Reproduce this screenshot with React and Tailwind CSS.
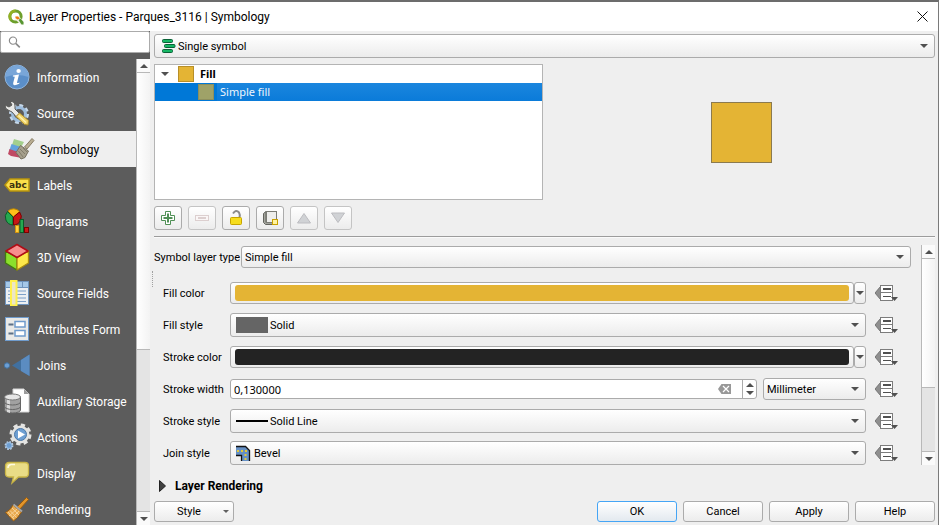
import React from "react";

const raised = "border border-[#ababab] rounded-[3px] bg-linear-to-b from-white to-[#ececec]";

function InfoIcon() {
  return (
    <svg width="26" height="26" viewBox="0 0 26 26">
      <circle cx="13" cy="13" r="12" fill="#5b8fc9" stroke="#8fb4dc" />
      <path d="M1.500 13A11.500 11.500 0 0 1 24.500 13Q13 9 1.500 13Z" fill="#79a6d8" />
      <ellipse cx="14.600" cy="7" rx="2.200" ry="1.900" fill="#fff" />
      <path d="M9 11.500L15 10.500L13 18.500Q13 19.600 15.500 18.500L15.200 19.800Q8.200 23 9.300 18.500L10.800 12.800L8.800 12.500Z" fill="#fff" />
    </svg>
  );
}

function SourceIcon() {
  return (
    <svg width="26" height="26" viewBox="0 0 26 26">
      <circle cx="15" cy="14" r="8" fill="none" stroke="#c5d8ea" strokeWidth="4" strokeDasharray="3.600 2.680" />
      <circle cx="15" cy="14" r="6.500" fill="#5c5c5c" stroke="#9dbddd" strokeWidth="3" />
      <path d="M4 10Q1 9 1 5L5 7L8 5L6 1.500Q11 1 11 6L11 9L18 16L14 19L8 12Z" fill="#e9e9e7" stroke="#5a5a58" />
      <path d="M12 16.500L15.500 13L24.500 20.500L24 25L20.500 24.500Z" fill="#f0d268" stroke="#a98a2c" />
      <path d="M14.500 15.500L22 22.500" stroke="#fff3b0" strokeWidth="1.500" />
    </svg>
  );
}

function SymbologyIcon() {
  return (
    <svg width="28" height="24" viewBox="0 0 28 24">
      <path d="M7 2L17 5L13 12L5 8Z" fill="#a3cf8c" />
      <path d="M4.500 7L14 10L10 17L2.500 13Z" fill="#62a2dc" />
      <path d="M2.500 12L11 15L15 21L4 19L1 17Z" fill="#c04a64" />
      <path d="M25 1.500L27 3.500L20 12L17.500 10Z" fill="#b9ad92" stroke="#887d66" />
      <path d="M13.500 8.500L21.500 14L18 20.500L14 22L9 15.500Z" fill="#a59f8c" stroke="#77715f" />
      <path d="M13 12L18 17M11.500 14L16 20M16 11L20 15" stroke="#827c6a" />
    </svg>
  );
}

function LabelsIcon() {
  return (
    <svg width="26" height="26" viewBox="0 0 26 26">
      <path d="M1 13L6 7H25V19H6Z" fill="#fbe04a" stroke="#b8940c" strokeWidth="1.500" />
      <text x="5" y="16" fontFamily="DejaVu Sans" fontWeight="bold" fontSize="9" fill="#3c3410">abc</text>
    </svg>
  );
}

function DiagramsIcon() {
  return (
    <svg width="26" height="26" viewBox="0 0 26 26">
      <path d="M9.500 9L4 3A8 8 0 0 1 15.500 3.500Z" fill="#ffc21a" stroke="#b98500" />
      <path d="M9 9L3.500 3.500A8 8 0 0 0 9 17Z" fill="#26a850" stroke="#0a5a28" />
      <path d="M9.500 9L15.500 4A8 8 0 0 1 9.500 17Z" fill="#c81616" stroke="#7a0000" />
      <rect x="11.500" y="17.500" width="3.500" height="7" fill="#ffd23c" stroke="#d09010" />
      <rect x="16" y="11.500" width="3.500" height="13" fill="#26a850" stroke="#0a5a28" />
      <rect x="20.500" y="19.500" width="4" height="5" fill="#c81616" stroke="#7a0000" />
    </svg>
  );
}

function CubeIcon() {
  return (
    <svg width="26" height="28" viewBox="0 0 26 28" strokeLinejoin="round">
      <path d="M1.500 8L13 14.500V27L1.500 20Z" fill="#8be02c" stroke="#417a10" strokeWidth="1.300" />
      <path d="M24.500 8L13 14.500V27L24.500 20Z" fill="#fde84a" stroke="#a88b10" strokeWidth="1.300" />
      <path d="M13 1.500L24 8L13 14.500L2 8Z" fill="#f88e8e" stroke="#b00c16" strokeWidth="1.500" />
    </svg>
  );
}

function FieldsIcon() {
  return (
    <svg width="26" height="26" viewBox="0 0 26 26">
      <rect x="1.500" y="1.500" width="23" height="23" fill="#eceff2" stroke="#6f94bd" />
      <rect x="2" y="2" width="22" height="5" fill="#a5c8e8" />
      <path d="M2 7.500H24M18.500 2V7" stroke="#6f94bd" />
      <path d="M4 11H22M4 14.500H22M4 18H22M4 21.500H22" stroke="#7da0c8" />
      <rect x="7" y="1" width="5.500" height="24.500" fill="#ece6c6" stroke="#fff04a" strokeWidth="2" />
    </svg>
  );
}

function FormIcon() {
  return (
    <svg width="26" height="26" viewBox="0 0 26 26">
      <rect x="1.500" y="1.500" width="23" height="23" fill="#e9e9e7" stroke="#6f9bcc" />
      <path d="M4.500 8.500H9.500M4.500 17.500H9.500" stroke="#5d7086" strokeWidth="2" />
      <rect x="11" y="5.500" width="10" height="5.500" fill="#fff" stroke="#6f9bcc" strokeWidth="1.500" />
      <rect x="11" y="14.500" width="10" height="5.500" fill="#fff" stroke="#6f9bcc" strokeWidth="1.500" />
    </svg>
  );
}

function JoinsIcon() {
  return (
    <svg width="26" height="26" viewBox="0 0 26 26">
      <circle cx="3" cy="13.500" r="2.700" fill="#6d9fd4" stroke="#41719f" />
      <path d="M8 13.500L25.500 2.500V24Z" fill="#41709f" />
      <path d="M17 8L25.500 2.500V24L17 19Z" fill="#5b8cc1" />
    </svg>
  );
}

function StorageIcon() {
  return (
    <svg width="26" height="28" viewBox="0 0 26 28">
      <path d="M9 2H20L25 7V25H9Z" fill="#fff" stroke="#d6d6d6" />
      <path d="M20 2V7H25Z" fill="#9b9b9b" />
      <path d="M.500 10V23A8 3 0 0 0 16.500 23V10Z" fill="#a1a1a1" stroke="#666" />
      <path d="M3 11V25L6 26V12Z" fill="#dadada" />
      <ellipse cx="8.500" cy="10" rx="8" ry="3" fill="#e5e5e5" stroke="#777" />
      <path d="M.500 15A8 3 0 0 0 16.500 15M.500 19.500A8 3 0 0 0 16.500 19.500" fill="none" stroke="#666" />
    </svg>
  );
}

function ActionsIcon() {
  return (
    <svg width="28" height="28" viewBox="0 0 28 28">
      <circle cx="16.500" cy="11.500" r="9.500" fill="none" stroke="#e4e4e2" strokeWidth="3" strokeDasharray="4.200 3.260" />
      <circle cx="16.500" cy="11.500" r="7.500" fill="#6e9fd2" stroke="#e4e4e2" strokeWidth="3" />
      <circle cx="16.500" cy="11.500" r="6" fill="none" stroke="#4b78a8" />
      <path d="M14 7.500L21 11.500L14 15.500Z" fill="#fff" />
      <circle cx="5" cy="22.500" r="3.700" fill="none" stroke="#b9d2ec" strokeWidth="1.500" strokeDasharray="1.700 1.200" />
      <circle cx="5" cy="22.500" r="3" fill="#6e9fd2" stroke="#a4c4e6" />
    </svg>
  );
}

function DisplayIcon() {
  return (
    <svg width="26" height="26" viewBox="0 0 26 26">
      <path d="M5 2.500H21Q24.500 2.500 24.500 6V13.500Q24.500 17 21 17H14.500L8 23L9.500 17H5Q1.500 17 1.500 13.500V6Q1.500 2.500 5 2.500Z" fill="#e9dc86" stroke="#c8b446" strokeWidth="1.300" />
      <path d="M4 8Q4 5 7 4.500L11 4.500" fill="none" stroke="#fffbe0" strokeWidth="1.500" />
    </svg>
  );
}

function RenderingIcon() {
  return (
    <svg width="26" height="26" viewBox="0 0 26 26">
      <path d="M22.500 1.500L24.500 3.500L16 13L13.500 10.500Z" fill="#e3952b" stroke="#9c5d0c" />
      <path d="M9 9L17.500 16Q14 22 9.500 25L1.500 16.500Q7 14 9 9Z" fill="#e8a94e" stroke="#9c5d0c" />
      <path d="M8 12L15 19M6 14.500L12.500 21.500M4 16L10 23M13 13L5 20M15 15L8 22" stroke="#f6d094" />
      <path d="M9.500 8.500L18 15.500" stroke="#a8a8a8" strokeWidth="2" />
    </svg>
  );
}

const sections = [
  ["Information", InfoIcon],
  ["Source", SourceIcon],
  ["Symbology", SymbologyIcon],
  ["Labels", LabelsIcon],
  ["Diagrams", DiagramsIcon],
  ["3D View", CubeIcon],
  ["Source Fields", FieldsIcon],
  ["Attributes Form", FormIcon],
  ["Joins", JoinsIcon],
  ["Auxiliary Storage", StorageIcon],
  ["Actions", ActionsIcon],
  ["Display", DisplayIcon],
  ["Rendering", RenderingIcon],
];

function Arrow({ up = false, className = "" }) {
  return (
    <svg className={className} width="8" height="4" viewBox="0 0 8 4">
      <path d={up ? "M0 4H8L4 0Z" : "M0 0H8L4 4Z"} fill="#505050" />
    </svg>
  );
}

function ScrollBar({ thumb }) {
  return (
    <div className="flex w-[14px] shrink-0 flex-col border-l border-[#b8b8b8] bg-[#e4e4e4]">
      <button aria-label="Scroll up" className="flex h-[14px] shrink-0 items-center justify-center border-b border-[#b8b8b8] bg-[#fafafa]"><Arrow up /></button>
      <div className={"border-b border-[#b8b8b8] bg-linear-to-r from-white to-[#f3f3f3] " + thumb} />
      <button aria-label="Scroll down" className="mt-auto flex h-[14px] shrink-0 items-center justify-center border-t border-[#b8b8b8] bg-[#fafafa]"><Arrow /></button>
    </div>
  );
}

function Select({ id, label, value, icon, className = "", pad = "pl-[3px]" }) {
  return (
    <div className={"grid min-w-0 items-center " + className}>
      <select id={id} aria-label={label} className={"col-start-1 row-start-1 h-full w-full min-w-0 appearance-none pt-px outline-none " + raised + " " + pad}>
        <option>{value}</option>
      </select>
      {icon && <span className="pointer-events-none col-start-1 row-start-1 justify-self-start pl-[6px]">{icon}</span>}
      <Arrow className="pointer-events-none col-start-1 row-start-1 mr-[7px] justify-self-end" />
    </div>
  );
}

function ColorButton({ id, label, color }) {
  return (
    <div className="flex h-[22px] flex-1">
      <button id={id} className={"flex-1 p-[2px] px-1 " + raised}><span className={"block h-full rounded-[3px] " + color} /></button>
      <button aria-label={label + " menu"} className={"flex w-3 items-center justify-center " + raised}><Arrow /></button>
    </div>
  );
}

function OverrideButton({ label }) {
  return (
    <button aria-label={label + " data defined override"} className="ml-[9px] h-[18px] w-6 shrink-0">
      <svg width="24" height="18" viewBox="0 0 24 18">
        <path d="M0 9L5.500 2.500V15.500Z" fill="#8f8f8f" stroke="#757575" />
        <rect x="5.500" y="1.500" width="12" height="15" fill="#fff" stroke="#7c7c7c" />
        <path d="M5 8.500H18" stroke="#7c7c7c" />
        <path d="M8 5H16" stroke="#505050" strokeWidth="2" />
        <path d="M8 12.500H16" stroke="#505050" />
        <path d="M16 13H23L19.500 17Z" fill="#505050" />
      </svg>
    </button>
  );
}

function Row({ id, label, children }) {
  return (
    <div className="flex h-8 items-center pl-[9px]">
      <label htmlFor={id} className="w-[67px] shrink-0 pt-[2px] whitespace-nowrap">{label}</label>
      <div className="flex flex-1 items-center">{children}</div>
      <OverrideButton label={label} />
    </div>
  );
}

function Tool({ label, disabled = false, children }) {
  return (
    <button aria-label={label} disabled={disabled} className={"flex h-6 w-7 items-center justify-center disabled:border-[#c4c4c4] " + raised}>
      <svg width="18" height="18" viewBox="0 0 18 18">{children}</svg>
    </button>
  );
}

const dialogButton = "h-[21px] w-20 border rounded-[3px] bg-linear-to-b from-white";

export default function App() {
  return (
    <div className="flex h-screen flex-col overflow-hidden border-t-2 border-r border-t-[#6c6c6c] border-r-[#7a7a7a] bg-[#efefef] font-[Roboto,sans-serif] text-[11px] leading-4 text-black">
      <header className="flex h-[29px] shrink-0 items-center bg-white pr-[10px] pl-2">
        <svg width="16" height="16" viewBox="0 0 16 16">
          <circle cx="7.500" cy="7.500" r="5.600" fill="none" stroke="#6d9f2c" strokeWidth="3" />
          <path d="M7.500 1.900A5.600 5.600 0 0 0 3 11" fill="none" stroke="#93b023" strokeWidth="2.600" />
          <path d="M7 7H10.500L16 12.500V15.500H12.500L7 10Z" fill="#f3f3e8" />
          <path d="M7.500 7.500H10L12 9.500L9.500 10.500L7.500 9Z" fill="#ee7913" />
          <path d="M10.500 11L12.500 9.500L15.500 13V15.500H13.500Z" fill="#589632" />
        </svg>
        <h1 className="ml-[5px] flex-1 text-xs font-normal">Layer Properties - Parques_3116 | Symbology</h1>
        <button aria-label="Close" className="h-[11px] w-[11px]">
          <svg width="11" height="11" viewBox="0 0 11 11"><path d="M.500 .500L10.500 10.500M10.500 .500L.500 10.500" stroke="#111" /></svg>
        </button>
      </header>

      <div className="flex min-h-0 flex-1">
        <aside className="flex w-[150px] shrink-0 flex-col bg-[#5c5c5c]">
          <div className="mb-[6px] flex h-[22px] shrink-0 items-center rounded-[2px] border border-[#ababab] bg-white pl-[7px]">
            <svg width="14" height="14" viewBox="0 0 14 14" fill="none" stroke="#8a8a8a">
              <circle cx="5.500" cy="5.500" r="4" strokeWidth="1.300" /><path d="M8.500 8.500L13 13" strokeWidth="1.800" />
            </svg>
            <input type="search" aria-label="Search" className="w-full min-w-0 bg-transparent px-1 outline-none" />
          </div>
          <div className="flex min-h-0 flex-1">
            <nav className="flex-1 overflow-hidden text-xs text-white">
              {sections.map(([name, Icon]) => (
                <a key={name} href="#" className={"flex h-9 items-center " + (name === "Symbology" ? "bg-[#efefef] pl-[7px] text-black" : "pl-1")}>
                  <span className="flex w-[33px] shrink-0 items-center"><Icon /></span>
                  <span className="pt-[2px] whitespace-nowrap">{name}</span>
                </a>
              ))}
            </nav>
            <ScrollBar thumb="h-[277px]" />
          </div>
        </aside>

        <main className="flex min-w-0 flex-1 flex-col pt-[3px] pr-[3px] pb-[3px] pl-1">
          <Select
            label="Symbol renderer"
            value="Single symbol"
            pad="pl-[23px]"
            className="h-6 shrink-0"
            icon={
              <svg className="ml-[2px]" width="14" height="14" viewBox="0 0 14 14" fill="#17b765" stroke="#0b6137">
                <rect x=".500" y=".500" width="10" height="3" rx="1" /><rect x="2.500" y="5.500" width="10.500" height="3" rx="1" /><rect x=".500" y="10.500" width="10" height="3" rx="1" />
              </svg>
            }
          />
          <section className="mt-[6px] flex h-[136px] shrink-0 gap-[6px] font-['Noto_Sans',sans-serif]">
            <ul className="flex-1 border border-[#b4b4b4] bg-white">
              <li className="flex h-[18px] items-center pl-[6px] font-bold">
                <Arrow />
                <span className="mr-[6px] ml-[9px] h-4 w-4 border border-[#b88f28] bg-[#e4b434]" />
                Fill
              </li>
              <li className="flex h-[18px] items-center bg-[#0078d7] pl-[43px] text-[#f0f6fc]">
                <span className="mr-[3px] h-4 w-4 border border-[#8d8f5d] bg-[#9fa268]" />
                <span className="h-full flex-1 bg-linear-to-b from-[#1a86de] to-[#0a7bd9] pl-[3px] leading-[18px]">Simple fill</span>
              </li>
            </ul>
            <div className="flex flex-1 items-center justify-center">
              <div className="h-[61px] w-[61px] border border-[#8b7a4e] bg-[#e4b434]" />
            </div>
          </section>

          <div className="mt-[6px] flex shrink-0 gap-[6px]">
            <Tool label="Add symbol layer">
              <path d="M6.500 2.500H11.500V6.500H15.500V11.500H11.500V15.500H6.500V11.500H2.500V6.500H6.500Z" fill="#fff" stroke="#4f8f55" />
              <path d="M9 4.500V13.500M4.500 9H13.500" stroke="#4f8f55" strokeWidth="2" />
            </Tool>
            <Tool label="Remove symbol layer" disabled>
              <rect x="2.500" y="6.500" width="13" height="5" fill="#faf6f6" stroke="#dccfcf" /><path d="M5 9H13" stroke="#dccfcf" strokeWidth="2" />
            </Tool>
            <Tool label="Lock layer color">
              <path d="M6 4.500Q9 0 12 3.500Q13.500 6 12.500 9" fill="none" stroke="#8b8b8b" strokeWidth="2" />
              <rect x="3.500" y="8.500" width="11" height="7" rx="1" fill="#f6dd1d" stroke="#c7a500" />
            </Tool>
            <Tool label="Duplicate symbol layer">
              <path d="M2.500 4.500L5 2.500V13.500H13V15.500H4.500L2.500 13.500Z" fill="#a4a59e" stroke="#63645e" />
              <rect x="5.500" y="2.500" width="10" height="11" fill="#eeeeec" stroke="#7b7c76" />
              <rect x="11.500" y="10.500" width="5" height="5" fill="#fff3a0" stroke="#c9a000" />
            </Tool>
            <Tool label="Move up" disabled><path d="M2.500 14L9 4.500L15.500 14Z" fill="#d0d2d5" stroke="#bcbcc0" /></Tool>
            <Tool label="Move down" disabled><path d="M2.500 4L9 13.500L15.500 4Z" fill="#d0d2d5" stroke="#bcbcc0" /></Tool>
          </div>

          <div className="mt-[6px] h-[2px] shrink-0 border-t border-b border-t-[#9c9c9c] border-b-[#fafafa]" />

          <section className="mt-[7px] -ml-1 flex min-h-0 flex-1">
            <div className="mt-[26px] mr-px ml-[2px] h-4 w-px shrink-0 border-l border-dotted border-[#a0a0a0]" />
            <div className="flex min-w-0 flex-1 flex-col overflow-hidden">
              <div className="mb-2 flex h-6 shrink-0 items-center pr-[10px]">
                <label htmlFor="layer-type" className="w-[87px] shrink-0 pt-[2px] whitespace-nowrap">Symbol layer type</label>
                <Select id="layer-type" value="Simple fill" className="h-[22px] flex-1" />
              </div>
              <div className="pr-[22px]">
                <Row id="fill-color" label="Fill color"><ColorButton id="fill-color" label="Fill color" color="bg-[#e4b434]" /></Row>
                <Row id="fill-style" label="Fill style">
                  <Select id="fill-style" value="Solid" pad="pl-[39px]" className="h-6 flex-1" icon={<span className="block h-4 w-8 bg-[#656565]" />} />
                </Row>
                <Row id="stroke-color" label="Stroke color"><ColorButton id="stroke-color" label="Stroke color" color="bg-[#232323]" /></Row>
                <Row id="stroke-width" label="Stroke width">
                  <div className="mr-[6px] flex h-5 min-w-0 flex-1 items-center rounded-[3px] border border-[#ababab] bg-white">
                    <input id="stroke-width" defaultValue="0,130000" className="min-w-0 flex-1 bg-transparent pt-px pl-[3px] font-['Noto_Sans',sans-serif] outline-none" />
                    <button aria-label="Clear" className="mr-[11px]">
                      <svg width="13" height="10" viewBox="0 0 13 10"><path d="M0 5L3.500 0H13V10H3.500Z" fill="#989898" /><path d="M5 2L11 8M11 2L5 8" stroke="#fff" strokeWidth="1.200" /></svg>
                    </button>
                    <div className="flex h-full w-[14px] flex-col items-center justify-center gap-1 border-l border-[#ababab]">
                      <button aria-label="Increase"><Arrow up className="block" /></button>
                      <button aria-label="Decrease"><Arrow className="block" /></button>
                    </div>
                  </div>
                  <Select label="Stroke width unit" value="Millimeter" className="h-[22px] w-[103px]" />
                </Row>
                <Row id="stroke-style" label="Stroke style">
                  <Select id="stroke-style" value="Solid Line" pad="pl-[39px]" className="h-6 flex-1" icon={<span className="block h-[2px] w-8 bg-black" />} />
                </Row>
                <Row id="join-style" label="Join style">
                  <Select id="join-style" value="Bevel" pad="pl-[23px]" className="h-6 flex-1"
                    icon={
                      <svg width="16" height="16" viewBox="0 0 16 16">
                        <path d="M0 2H10L13.500 5.500V16H6V11H0Z" fill="#6690c4" />
                        <path d="M0 1.500H9.500L13.500 5.500V16M0 10.500H5.500V16" fill="none" stroke="#111" strokeWidth="1.300" />
                        <path d="M1 6H11M9.500 9V16" stroke="#e2c83a" strokeWidth="2" strokeDasharray="2 2" />
                      </svg>
                    }
                  />
                </Row>
              </div>
            </div>
            <ScrollBar thumb="h-[129px]" />
          </section>

          <button className="mt-[2px] flex h-9 shrink-0 items-center gap-[9px] pt-[2px] pl-[5px] text-xs font-bold">
            <svg width="7" height="12" viewBox="0 0 7 12"><path d="M.500 .500L6.500 6L.500 11.500Z" fill="#404040" stroke="#222" /></svg>
            Layer Rendering
          </button>

          <footer className="-mt-[2px] flex shrink-0 gap-[6px]">
            <button className={"mr-auto flex h-[21px] w-20 items-center pr-1 " + raised}>
              <span className="flex-1 pt-px">Style</span>
              <svg width="6" height="3" viewBox="0 0 6 3"><path d="M0 0H6L3 3Z" fill="#606060" /></svg>
            </button>
            <button className={dialogButton + " border-[#45a5f5] to-[#e3e9ef]"}>OK</button>
            <button className={dialogButton + " border-[#ababab] to-[#ececec]"}>Cancel</button>
            <button className={dialogButton + " border-[#ababab] to-[#ececec]"}>Apply</button>
            <button className={dialogButton + " border-[#ababab] to-[#ececec]"}>Help</button>
          </footer>
        </main>
      </div>
    </div>
  );
}
